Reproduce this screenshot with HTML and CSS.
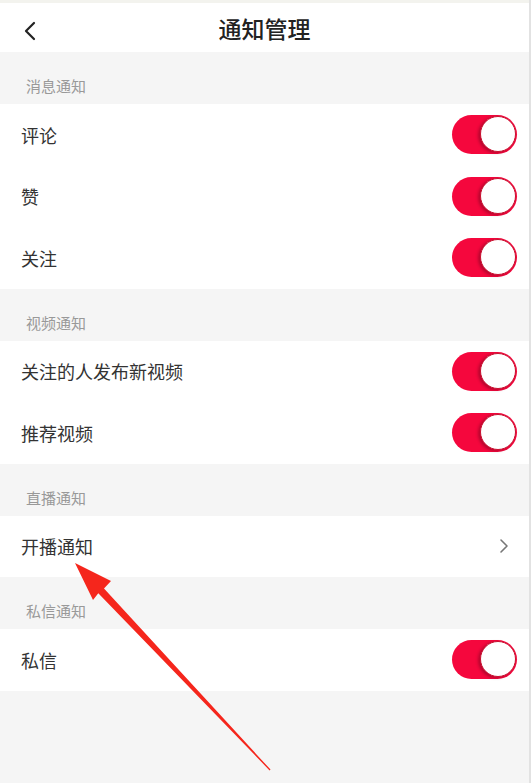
FILE: index.html
```html
<!DOCTYPE html>
<html lang="zh-CN">
<head>
  <meta charset="UTF-8">
  <meta name="viewport" content="width=device-width, initial-scale=1.0">
  <title>通知管理</title>
  <link rel="stylesheet" href="styles.css">
</head>
<body>
  <div class="page">
    <div class="nav">
      <svg class="back" width="12" height="20" viewBox="0 0 12 20">
        <polyline points="10,2 2,10 10,18" fill="none" stroke="#222" stroke-width="2.2" stroke-linecap="round" stroke-linejoin="round"/>
      </svg>
      <h1>通知管理</h1>
    </div>

    <!-- 消息通知 -->
    <div class="section-title">消息通知</div>
    <div class="row"><span>评论</span><span class="switch on"></span></div>
    <div class="row"><span>赞</span><span class="switch on"></span></div>
    <div class="row"><span>关注</span><span class="switch on"></span></div>

    <!-- 视频通知 -->
    <div class="section-title">视频通知</div>
    <div class="row"><span>关注的人发布新视频</span><span class="switch on"></span></div>
    <div class="row"><span>推荐视频</span><span class="switch on"></span></div>

    <!-- 直播通知 -->
    <div class="section-title">直播通知</div>
    <div class="row">
      <span>开播通知</span>
      <svg class="more" width="10" height="16" viewBox="0 0 10 16">
        <polyline points="2,2 8,8 2,14" fill="none" stroke="#777" stroke-width="1.6" stroke-linecap="round" stroke-linejoin="round"/>
      </svg>
    </div>

    <!-- 私信通知 -->
    <div class="section-title">私信通知</div>
    <div class="row"><span>私信</span><span class="switch on"></span></div>

    <!-- 红色箭头标注 -->
    <svg class="arrow" width="531" height="783" viewBox="0 0 531 783">
      <polygon fill="#f5261c" points="75,563 111,581 104,588.5 270.5,769.6 269.6,770.4 98.3,593.3 93,600"/>
    </svg>
  </div>
</body>
</html>
```

FILE: styles.css
```css
body {
  margin: 0;
  font-family: "Noto Sans CJK SC", "Noto Sans", sans-serif;
  background-color: #f5f5f5;
}
.page {
  position: relative;
  min-height: 783px;
  border-right: 2px solid #e2e2e2;
  box-sizing: border-box;
}
.nav {
  position: relative;
  height: 52px;
  background-color: #fff;
  border-top: 3px solid #f3f3ee;
  box-sizing: border-box;
  display: flex;
  align-items: center;
  justify-content: center;
}
.nav h1 {
  margin: 0;
  font-size: 23px;
  font-weight: 500;
  color: #222;
}
.back {
  position: absolute;
  left: 24px;
  top: 18px;
}
/* 分组标题 */
.section-title {
  height: 52px;
  line-height: 52px;
  padding-left: 26px;
  padding-top: 8px;
  font-size: 15px;
  color: #999;
  box-sizing: border-box;
}
.row {
  height: 61.5px;
  background-color: #fff;
  display: flex;
  align-items: center;
  justify-content: space-between;
  padding: 0 12px 0 21px;
  font-size: 18px;
  color: #333;
}
.more {
  margin-right: 8px;
}
/* 开关 */
.switch {
  position: relative;
  width: 65px;
  height: 39px;
  border-radius: 20px;
  background-color: #f5073d;
}
.switch.on::after {
  content: "";
  position: absolute;
  right: 1px;
  top: 1px;
  width: 34px;
  height: 34px;
  border-radius: 50%;
  background-color: #fff;
  border: 1.5px solid #c8102e;
  box-shadow: -2px 1px 3px rgba(0, 0, 0, 0.25);
}
.arrow {
  position: absolute;
  left: 0;
  top: 0;
  pointer-events: none;
}
```
